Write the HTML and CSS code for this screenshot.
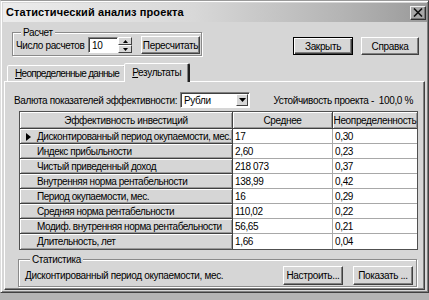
FILE: index.html
```html
<!DOCTYPE html>
<html lang="ru">
<head>
<meta charset="utf-8">
<title>Статистический анализ проекта</title>
<link rel="stylesheet" href="styles.css">
</head>
<body>
<div class="window">
  <div class="titlebar">
    <span class="title">Статистический анализ проекта</span>
    <span class="close"><svg width="10" height="9" viewBox="0 0 10 9"><path d="M1 0.5 L9 8.5 M9 0.5 L1 8.5" stroke="#111" stroke-width="1.6"/></svg></span>
  </div>

  <div class="toprow">
    <fieldset class="group calc">
      <legend>Расчет</legend>
      <div class="calc-row">
        <span class="lbl">Число расчетов</span>
        <div class="spinner">
          <span class="edit">10</span>
          <span class="spin-btns">
            <span class="spin-btn"><svg width="5" height="3" viewBox="0 0 5 3"><path d="M0 3 L2.5 0 L5 3Z" fill="#000"/></svg></span>
            <span class="spin-btn"><svg width="5" height="3" viewBox="0 0 5 3"><path d="M0 0 L2.5 3 L5 0Z" fill="#000"/></svg></span>
          </span>
        </div>
        <button class="btn recalc">Пересчитать</button>
      </div>
    </fieldset>
    <div class="actions">
      <button class="btn default close-btn">Закрыть</button>
      <button class="btn help-btn">Справка</button>
    </div>
  </div>

  <div class="tabs">
    <div class="tab"><u>Н</u>еопределенные данные</div>
    <div class="tab active"><u>Р</u>езультаты</div>
  </div>

  <div class="panel">
    <div class="currency">
      <span class="cur-label">Валюта показателей эффективности:</span>
      <div class="combo">
        <span class="combo-value">Рубли</span>
        <span class="combo-btn"><svg width="7" height="4" viewBox="0 0 7 4"><path d="M0 0 L3.5 4 L7 0Z" fill="#000"/></svg></span>
      </div>
      <span class="stability">Устойчивость проекта -&nbsp; 100,0 %</span>
    </div>

    <table class="grid">
      <thead>
        <tr><th class="c1">Эффективность инвестиций</th><th class="c2">Среднее</th><th class="c3">Неопределенность</th></tr>
      </thead>
      <tbody>
        <tr><th><span class="ind"><svg width="5" height="8" viewBox="0 0 5 8"><path d="M0 0 L5 4 L0 8Z" fill="#000"/></svg></span>Дисконтированный период окупаемости, мес.</th><td>17</td><td>0,30</td></tr>
        <tr><th><span class="ind"></span>Индекс прибыльности</th><td>2,60</td><td>0,23</td></tr>
        <tr><th><span class="ind"></span>Чистый приведенный доход</th><td>218 073</td><td>0,37</td></tr>
        <tr><th><span class="ind"></span>Внутренняя норма рентабельности</th><td>138,99</td><td>0,42</td></tr>
        <tr><th><span class="ind"></span>Период окупаемости, мес.</th><td>16</td><td>0,29</td></tr>
        <tr><th><span class="ind"></span>Средняя норма рентабельности</th><td>110,02</td><td>0,22</td></tr>
        <tr><th><span class="ind"></span>Модиф. внутренняя норма рентабельности</th><td>56,65</td><td>0,21</td></tr>
        <tr><th><span class="ind"></span>Длительность, лет</th><td>1,66</td><td>0,04</td></tr>
      </tbody>
    </table>

    <fieldset class="group stats">
      <legend>Статистика</legend>
      <div class="stats-row">
        <span class="stats-text">Дисконтированный период окупаемости, мес.</span>
        <button class="btn wide">Настроить...</button>
        <button class="btn wide">Показать ...</button>
      </div>
    </fieldset>
  </div>
</div>
</body>
</html>
```

FILE: styles.css
```css
* { box-sizing: border-box; }
html, body { margin: 0; padding: 0; }
body {
  width: 429px;
  height: 300px;
  overflow: hidden;
  background: #b4b4b4;
  font-family: "Liberation Sans", Arial, sans-serif;
  font-size: 10px;
  letter-spacing: -0.35px;
  line-height: 13px;
  color: #000;
}

.window {
  width: 429px;
  height: 293px;
  display: flex;
  flex-direction: column;
  background: #d6d6d6;
  border: 1px solid;
  border-color: #9a9a9a #404040 #404040 #dcdcdc;
  box-shadow: inset 1px 1px #fff, inset -1px -1px #808080;
  padding: 2px 1px 2px 2px;
}

/* title bar */
.titlebar {
  height: 19px;
  flex: none;
  display: flex;
  align-items: center;
  justify-content: space-between;
  padding: 0 1px 0 3px;
  background: linear-gradient(to right, #ececec 0%, #d8d8d8 45%, #b4b4b4 80%, #9a9a9a 100%);
}
.title {
  font-weight: bold;
  font-size: 11px;
  letter-spacing: 0.1px;
}
.close {
  width: 16px;
  height: 14px;
  display: flex;
  align-items: center;
  justify-content: center;
  background: #a8a8a8;
  border: 1px solid;
  border-color: #f0f0f0 #303030 #303030 #f0f0f0;
  box-shadow: inset -1px -1px #777;
}
.close svg { display: block; }

/* top row */
.toprow {
  height: 41px;
  flex: none;
  display: flex;
  align-items: flex-start;
  padding: 5px 0 0 9px;
}

.group {
  margin: 0;
  border: 1px solid #8a8a8a;
  box-shadow: 1px 1px 0 #fff, inset 1px 1px 0 #fff;
  min-width: 0;
}
.group legend {
  padding: 0 2px;
  margin-left: 5px;
  line-height: 11px;
  background: #d6d6d6;
}

.calc {
  width: 190px;
  padding: 0 0 1px 3px;
}
.calc-row {
  display: flex;
  align-items: center;
  height: 18px;
  margin-top: -2px;
}
.lbl { width: 72px; white-space: nowrap; }

.spinner { display: flex; height: 16px; }
.edit {
  width: 30px;
  height: 16px;
  background: #fff;
  border: 1px solid;
  border-color: #808080 #fff #fff #808080;
  box-shadow: inset 1px 1px #404040;
  padding: 1px 0 0 3px;
  line-height: 13px;
}
.spin-btns {
  width: 14px;
  display: flex;
  flex-direction: column;
}
.spin-btn {
  height: 8px;
  display: flex;
  align-items: center;
  justify-content: center;
  background: #d6d6d6;
  border: 1px solid;
  border-color: #fff #404040 #404040 #fff;
}
.spin-btn svg { display: block; }

.btn {
  font: inherit;
  letter-spacing: inherit;
  line-height: 13px;
  color: #000;
  height: 19px;
  padding: 0;
  background: #d6d6d6;
  border: 1px solid;
  border-color: #fff #404040 #404040 #fff;
  box-shadow: inset -1px -1px #808080;
}
.recalc { width: 59px; margin-left: 9px; height: 18px; }

.actions {
  margin-left: auto;
  margin-right: 8px;
  margin-top: 10px;
  display: flex;
  gap: 8px;
}
.actions .btn { height: 18px; }
.close-btn { width: 60px; }
.help-btn { width: 58px; }
.btn.default {
  border-color: #000;
  box-shadow: inset 1px 1px #fff, inset -1px -1px #404040, inset -2px -2px #808080;
}

/* tabs */
.tabs {
  height: 18px;
  flex: none;
  display: flex;
  align-items: flex-end;
  padding-left: 4px;
}
.tab {
  height: 16px;
  padding: 1px 6px 0 7px;
  border: 1px solid;
  border-bottom: 0;
  border-color: #fff #404040 transparent #fff;
  border-radius: 2px 2px 0 0;
  box-shadow: inset -1px 0 #808080;
  line-height: 13px;
  letter-spacing: -0.7px;
  background: #d6d6d6;
}
.tab u { text-decoration: underline; text-underline-offset: 1px; }
.tab.active {
  height: 19px;
  margin: 0 0 -1px -2px;
  padding: 2px 7px 0 7px;
  position: relative;
  z-index: 1;
  letter-spacing: -0.35px;
  border-right-width: 2px;
  border-right-color: #202020;
}

/* panel */
.panel {
  flex: 1;
  margin: 0 2px 0 1px;
  border: 1px solid;
  border-color: #fff #404040 #404040 #fff;
  box-shadow: inset -1px -1px #808080;
  padding: 10px 5px 2px 9px;
  display: flex;
  flex-direction: column;
}

.currency {
  display: flex;
  align-items: center;
  height: 16px;
  padding-right: 6px;
}
.cur-label { width: 166px; white-space: nowrap; }
.combo {
  width: 70px;
  height: 16px;
  display: flex;
  align-items: center;
  background: #fff;
  border: 1px solid;
  border-color: #808080 #fff #fff #808080;
  box-shadow: inset 1px 1px #404040;
  padding: 0 1px 0 3px;
}
.combo-value { flex: 1; }
.combo-btn {
  width: 12px;
  height: 12px;
  display: flex;
  align-items: center;
  justify-content: center;
  background: #d6d6d6;
  border: 1px solid;
  border-color: #fff #404040 #404040 #fff;
}
.combo-btn svg { display: block; }
.stability { margin-left: auto; white-space: nowrap; }

/* grid */
.grid {
  margin: 3px 0 0 5px;
  width: 399px;
  border-collapse: separate;
  border-spacing: 0;
  border: 1px solid #505050;
  table-layout: fixed;
}
.grid th, .grid td {
  padding: 0;
  height: 15px;
  font-weight: normal;
  text-align: left;
  white-space: nowrap;
  overflow: hidden;
  line-height: 13px;
}
.grid thead th {
  height: 17px;
  text-align: center;
  background: #d6d6d6;
  border-right: 1px solid #404040;
  border-bottom: 1px solid #404040;
  box-shadow: inset 1px 1px #fff, inset -1px -1px #9a9a9a;
}
.grid thead th:last-child { border-right: 0; }
.grid .c1 { width: 213px; }
.grid .c2 { width: 100px; }
.grid tbody th {
  background: #d6d6d6;
  letter-spacing: -0.45px;
  border-right: 1px solid #404040;
  border-bottom: 1px solid #404040;
  box-shadow: inset 1px 1px #fff, inset -1px -1px #9a9a9a;
}
.grid tbody tr:last-child th, .grid tbody tr:last-child td { border-bottom: 0; }
.ind {
  display: inline-block;
  width: 17px;
  padding-left: 6px;
  vertical-align: middle;
}
.ind svg { display: block; }
.grid td {
  background: #fff;
  padding-left: 2px;
  border-right: 1px solid #a8a8a8;
  border-bottom: 1px solid #a8a8a8;
}
.grid td:last-child { border-right: 0; }

/* statistics */
.stats {
  margin: 4px 2px 0 4px;
  padding: 0 3px 1px 6px;
}
.stats-row {
  display: flex;
  align-items: center;
  height: 20px;
}
.stats-text { flex: 1; white-space: nowrap; }
.stats .wide { width: 60px; height: 19px; margin-left: 10px; }
```
